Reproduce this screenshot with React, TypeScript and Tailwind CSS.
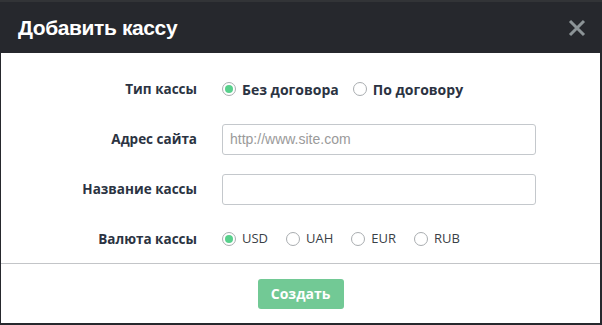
function Radio({ checked, label, bold }: { checked?: boolean; label: string; bold?: boolean }) {
  return (
    <label className="flex items-center gap-[6px] cursor-pointer">
      <span className="w-[14px] h-[14px] rounded-full border border-[#a9adb0] bg-white flex items-center justify-center">
        {checked && <span className="w-[8px] h-[8px] rounded-full bg-[#58d08c]" />}
      </span>
      <span className={bold ? "font-bold text-[#2b3342] text-[14px]" : "text-[#3a3f47]"}>{label}</span>
    </label>
  );
}

function Row({ label, children }: { label: string; children: React.ReactNode }) {
  return (
    <div className="flex items-center h-[50px]">
      <div className="w-[196px] text-right font-bold text-[#2b3342] text-[13.5px]">{label}</div>
      <div className="ml-[25px] flex items-center">{children}</div>
    </div>
  );
}

export default function App() {
  return (
    <div className="w-[602px] h-[325px] bg-[#26282d] flex flex-col border-t-2 border-[#323437]">
      <div className="h-[51px] flex items-center justify-between pl-[18px] pr-[16px] shrink-0">
        <h1 className="text-white font-bold text-[21px] font-['Liberation_Sans',Arial,sans-serif] tracking-[-0.4px]">
          Добавить кассу
        </h1>
        <button className="text-[#8c9497]">
          <svg width="18" height="18" viewBox="0 0 18 18">
            <path d="M2 2 L16 16 M16 2 L2 16" stroke="currentColor" strokeWidth="3" />
          </svg>
        </button>
      </div>
      <div className="flex-1 bg-white ml-[1px] mr-[2px] mb-[2px] flex flex-col font-['Open_Sans',sans-serif] text-[13px]">
        <div className="pt-[11px] h-[210px]">
          <Row label="Тип кассы">
            <div className="flex items-center gap-[14px]">
              <Radio checked bold label="Без договора" />
              <Radio bold label="По договору" />
            </div>
          </Row>
          <Row label="Адрес сайта">
            <input
              className="w-[314px] h-[31px] border border-[#c4c8cc] rounded-[3px] px-[7px] text-[14px] font-['Liberation_Sans',Arial,sans-serif] text-[#333] placeholder:text-[#9a9a9a] outline-none"
              placeholder="http://www.site.com"
            />
          </Row>
          <Row label="Название кассы">
            <input className="w-[314px] h-[31px] border border-[#c4c8cc] rounded-[3px] px-[7px] text-[14px] outline-none" />
          </Row>
          <Row label="Валюта кассы">
            <div className="flex items-center gap-[18px]">
              <Radio checked label="USD" />
              <Radio label="UAH" />
              <Radio label="EUR" />
              <Radio label="RUB" />
            </div>
          </Row>
        </div>
        <div className="border-t border-[#c3c5c8] flex-1 flex items-center justify-center">
          <button className="w-[86px] h-[30px] rounded-[3px] bg-[#72c995] text-white font-bold text-[14px]">
            Создать
          </button>
        </div>
      </div>
    </div>
  );
}
